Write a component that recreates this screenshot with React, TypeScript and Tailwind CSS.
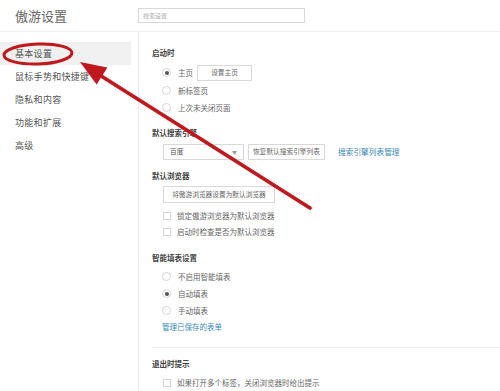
import { ReactNode } from "react";

const font = { fontFamily: '"Noto Sans CJK SC", "Noto Sans", sans-serif' };

const sideItems = ["基本设置", "鼠标手势和快捷键", "隐私和内容", "功能和扩展", "高级"];

function Radio({ checked, children }: { checked?: boolean; children: ReactNode }) {
  return (
    <div className="flex h-[17px] items-center ml-[10px]">
      <span className="flex h-[9px] w-[9px] items-center justify-center rounded-full border border-[#d4d4d4] bg-white">
        {checked && <span className="h-[4px] w-[4px] rounded-full bg-[#555]" />}
      </span>
      <span className="ml-[7px] text-[7.5px] text-[#666]">{children}</span>
    </div>
  );
}

function Check({ children }: { children: ReactNode }) {
  return (
    <div className="flex h-[16px] items-center ml-[11px]">
      <span className="h-[8px] w-[8px] border border-[#d4d4d4] bg-white" />
      <span className="ml-[6px] text-[7.5px] text-[#666]">{children}</span>
    </div>
  );
}

function Heading({ children, className = "" }: { children: ReactNode; className?: string }) {
  return (
    <div className={`flex h-4 items-center text-[7.5px] font-bold text-[#444] ${className}`}>
      {children}
    </div>
  );
}

function Btn({ children, className = "" }: { children: ReactNode; className?: string }) {
  return (
    <div
      className={`flex items-center justify-center border border-[#d9d9d9] bg-white text-[6.7px] text-[#666] ${className}`}
    >
      {children}
    </div>
  );
}

export default function App() {
  return (
    <div className="relative h-[391px] w-[500px] overflow-hidden bg-white" style={font}>
      {/* Header */}
      <header className="flex h-[32px] items-center border-b border-[#f2f2f2]">
        <h1 className="w-[138px] pl-[15px] text-[13px] text-[#666]">傲游设置</h1>
        <div className="flex h-[15px] w-[167px] items-center border border-[#d8d8d8] pl-[4px] text-[6px] text-[#aaa]">
          搜索设置
        </div>
      </header>

      <div className="flex">
        {/* Sidebar */}
        <nav className="w-[139px] border-r border-[#ececec] pt-[10px] h-[359px]">
          {sideItems.map((item, i) => (
            <div
              key={item}
              className={`flex h-[23px] items-center mr-[7px] pl-[15px] text-[9px] tracking-[0.3px] text-[#555] ${
                i === 0 ? "bg-[#f0f0f0]" : ""
              }`}
            >
              {item}
            </div>
          ))}
        </nav>

        {/* Content */}
        <main className="flex-1 pl-[13px] pt-[13px]">
          <Heading>启动时</Heading>
          <div className="mt-[3px] flex items-center">
            <Radio checked>主页</Radio>
            <Btn className="ml-[4px] h-[16px] w-[55px]">设置主页</Btn>
          </div>
          <div className="mt-[1px]">
            <Radio>新标签页</Radio>
          </div>
          <Radio>上次未关闭页面</Radio>

          <Heading className="mt-[9px]">默认搜索引擎</Heading>
          <div className="mt-[2px] flex h-[17px] items-center ml-[11px]">
            <div className="flex h-[16px] w-[81px] items-center justify-between border border-[#d9d9d9] px-[6px] text-[6.7px] text-[#555]">
              <span>百度</span>
              <span className="text-[5px] text-[#999]">▼</span>
            </div>
            <Btn className="ml-[4px] h-[16px] w-[77px]">恢复默认搜索引擎列表</Btn>
            <span className="ml-[13px] text-[7.7px] text-[#3a88b5]">搜索引擎列表管理</span>
          </div>

          <Heading className="mt-[8px]">默认浏览器</Heading>
          <div className="mt-[2px] flex h-[17px] ml-[11px]">
            <Btn className="h-[17px] w-[112px]">将傲游浏览器设置为默认浏览器</Btn>
          </div>
          <div className="mt-[5px]">
            <Check>锁定傲游浏览器为默认浏览器</Check>
          </div>
          <Check>启动时检查是否为默认浏览器</Check>

          <Heading className="mt-[10px]">智能填表设置</Heading>
          <div className="mt-[2px]">
            <Radio>不启用智能填表</Radio>
          </div>
          <Radio checked>自动填表</Radio>
          <Radio>手动填表</Radio>
          <div className="flex h-[16px] items-center ml-[10px] text-[7.5px] text-[#3a88b5]">
            管理已保存的表单
          </div>

          <div className="mt-[12px] h-px bg-[#eeeeee]" />

          <Heading className="mt-[8px]">退出时提示</Heading>
          <div className="mt-[3px]">
            <Check>如果打开多个标签，关闭浏览器时给出提示</Check>
          </div>
        </main>
      </div>

      {/* Red annotation drawn over the screenshot */}
      <svg
        className="pointer-events-none absolute left-0 top-0"
        width="500"
        height="391"
        viewBox="0 0 500 391"
      >
        <ellipse
          cx="38"
          cy="54"
          rx="34"
          ry="10"
          fill="none"
          stroke="#bf181d"
          strokeWidth="3"
          transform="rotate(-2 38 54)"
        />
        <line
          x1="310"
          y1="208"
          x2="98"
          y2="74"
          stroke="#bf181d"
          strokeWidth="3.8"
          strokeLinecap="round"
        />
        <polygon points="80,62 96.6,84.4 107.4,67.4" fill="#bf181d" />
      </svg>
    </div>
  );
}
